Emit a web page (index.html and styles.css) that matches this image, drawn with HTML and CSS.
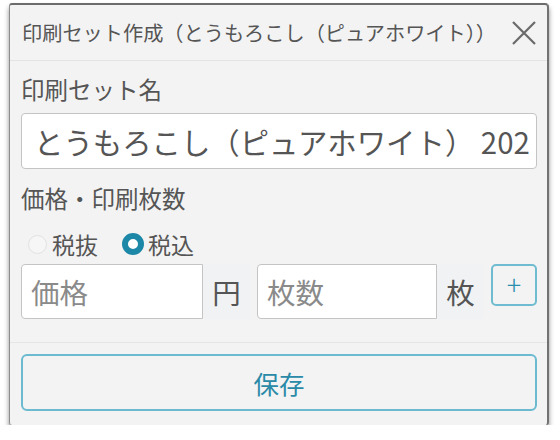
FILE: index.html
```html
<!DOCTYPE html>
<html lang="ja">
<head>
<meta charset="utf-8">
<link rel="stylesheet" href="styles.css">
</head>
<body>
<div class="dialog">
  <div class="header">
    <div class="title">印刷セット作成（とうもろこし（ピュアホワイト））</div>
    <div class="close">
      <svg width="26" height="26" viewBox="0 0 26 26"><path d="M2 2 L24 24 M24 2 L2 24" stroke="#6a6a6a" stroke-width="2.2" fill="none"/></svg>
    </div>
  </div>
  <div class="body">
    <div class="label">印刷セット名</div>
    <div class="name-input">とうもろこし（ピュアホワイト） 202</div>
    <div class="label label2">価格・印刷枚数</div>
    <div class="radios">
      <span class="radio"></span><span class="rtext">税抜</span>
      <span class="radio checked"></span><span class="rtext">税込</span>
    </div>
    <div class="group">
      <div class="field price">価格</div>
      <div class="addon">円</div>
      <div class="field count">枚数</div>
      <div class="addon">枚</div>
      <div class="plus">+</div>
    </div>
  </div>
  <div class="footer">
    <div class="save">保存</div>
  </div>
</div>
</body>
</html>
```
FILE: styles.css
```css
html, body {
  margin: 0;
  background: #ffffff;
}
body {
  font-family: "Noto Sans CJK JP", "Noto Sans", sans-serif;
  color: #555;
}
.dialog {
  margin: 3px 0 0 9px;
  width: 537px;
  background: #f3f3f3;
  border-top: 2px solid #6c6c6c;
  border-left: 1px solid #8d8d8d;
  border-right: 2px solid #727272;
  border-radius: 3px 4px 3px 3px;
  box-shadow: 0 4px 5px rgba(0,0,0,0.45);
}
.header {
  height: 55px;
  border-bottom: 1px solid #e3e3e3;
  display: flex;
  align-items: center;
  justify-content: space-between;
  padding: 0 10px 0 12px;
}
.title {
  font-size: 20.2px;
  color: #555;
  white-space: nowrap;
  margin-top: -1px;
}
.close {
  width: 26px;
  height: 26px;
  display: flex;
}
.body {
  padding: 13px 10px 23px 11px;
}
.label {
  font-size: 23.5px;
  line-height: 30px;
  height: 30px;
  color: #555;
}
.name-input {
  margin-top: 9px;
  height: 54px;
  background: #fff;
  border: 1px solid #c4c4c4;
  border-radius: 4px;
  font-size: 29.4px;
  line-height: 54px;
  padding-left: 12px;
  white-space: nowrap;
  overflow: hidden;
  color: #555;
}
.label2 {
  margin-top: 14px;
}
.radios {
  display: flex;
  align-items: center;
  height: 26px;
  margin-top: 18px;
  font-size: 23px;
  color: #555;
}
.radio {
  width: 19px;
  height: 19px;
  border-radius: 50%;
  border: 1px solid #e2e2e2;
  background: #f6f6f6;
  margin-left: 7px;
  margin-right: 5px;
  box-sizing: border-box;
}
.radio.checked {
  width: 22px;
  height: 22px;
  border: 6px solid #1d87a7;
  background: #fff;
  margin-left: 24px;
  margin-right: 4px;
}
.rtext {
  line-height: 26px;
}
.group {
  display: flex;
  align-items: flex-start;
  margin-top: 7px;
}
.field {
  height: 53px;
  background: #fff;
  border: 1px solid #c4c4c4;
  border-radius: 4px 0 0 4px;
  font-size: 28.5px;
  line-height: 53px;
  padding-left: 9px;
  color: #8a8a8a;
  box-sizing: content-box;
}
.price {
  width: 171px;
}
.count {
  width: 169px;
  margin-left: 7px;
}
.addon {
  width: 47px;
  height: 55px;
  background: #f0f2f4;
  border-radius: 0 4px 4px 0;
  font-size: 28.5px;
  line-height: 55px;
  text-align: center;
  color: #555;
}
.plus {
  margin-left: 7px;
  width: 42px;
  height: 38px;
  border: 2px solid #6fbcd0;
  border-radius: 5px;
  color: #2a8fae;
  font-size: 27px;
  font-weight: 300;
  line-height: 36px;
  text-align: center;
}
.footer {
  border-top: 1px solid #e6e6e6;
  padding: 11px 10px 14px 11px;
}
.save {
  height: 53px;
  border: 2px solid #6cbad0;
  border-radius: 6px;
  text-align: center;
  font-size: 25.5px;
  line-height: 53px;
  color: #2a8aa8;
}
```
